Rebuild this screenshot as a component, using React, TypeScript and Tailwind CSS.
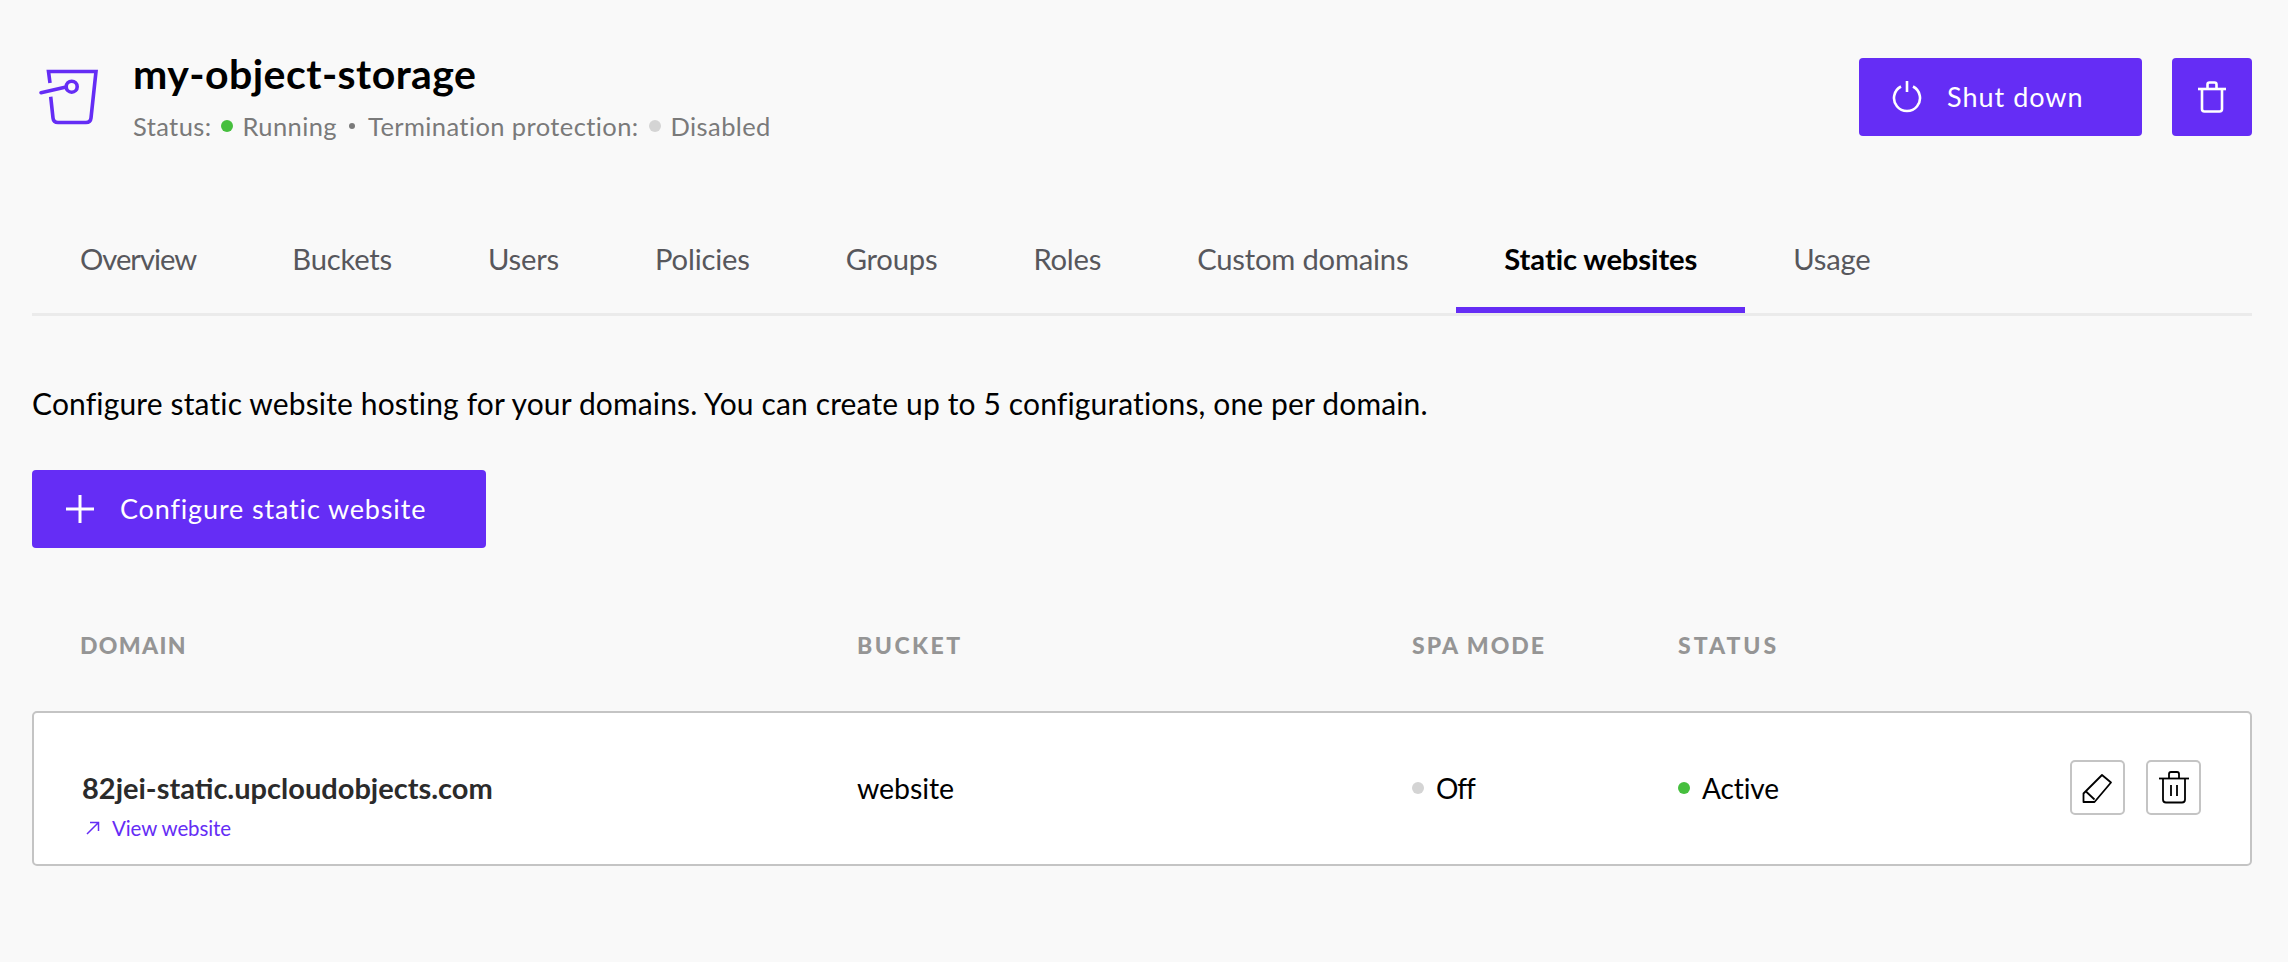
import React from "react";

const font = "font-['Lato','Noto_Sans',sans-serif]";

function BucketIcon() {
  return (
    <svg width="60" height="64" viewBox="0 0 60 64" fill="none" stroke="#652df5" strokeWidth="3.6" className="shrink-0">
      <path d="M12 21 L10.5 9.5 H58 L53 56 Q52.5 60.5 48 60.5 H20 Q15.5 60.5 15 56 L12.7 34.7" />
      <path d="M3 30.7 L27 25.3" strokeLinecap="round" />
      <circle cx="33.7" cy="24.7" r="5.5" />
    </svg>
  );
}

function PowerIcon() {
  return (
    <svg width="30" height="34" viewBox="0 0 30 34" fill="none" stroke="#fff" strokeWidth="2.6">
      <path d="M15 1 V12" />
      <path d="M9 6.5 A13 13 0 1 0 21 6.5" />
    </svg>
  );
}

function TrashOutline() {
  return (
    <svg width="30" height="32" viewBox="0 0 30 32" fill="none" stroke="#fff" strokeWidth="2.6">
      <path d="M1 8 H29" />
      <path d="M10.5 8 V3.5 Q10.5 1.5 12.5 1.5 H17.5 Q19.5 1.5 19.5 3.5 V8" />
      <path d="M5 8 V28 Q5 30.5 7.5 30.5 H22.5 Q25 30.5 25 28 V8" />
    </svg>
  );
}

function PlusIcon() {
  return (
    <svg width="28" height="28" viewBox="0 0 28 28" fill="none" stroke="#fff" strokeWidth="3">
      <path d="M14 0 V28 M0 14 H28" />
    </svg>
  );
}

function ArrowIcon() {
  return (
    <svg width="14" height="14" viewBox="0 0 14 14" fill="none" stroke="#652df5" strokeWidth="1.5">
      <path d="M1 13 L12.5 1.5 M4 1.5 H12.5 V10" />
    </svg>
  );
}

function PencilIcon() {
  return (
    <svg width="31" height="32" viewBox="0 0 31 32" fill="none" stroke="#000" strokeWidth="1.8">
      <path d="M20 3 L29 10.5 L12.5 30 H1.5 V21.5 Z" strokeLinejoin="round" />
      <path d="M4 19.5 L12.5 27.5" />
    </svg>
  );
}

function RowTrashIcon() {
  return (
    <svg width="30" height="33" viewBox="0 0 30 33" fill="none" stroke="#000" strokeWidth="1.8">
      <path d="M0 7.5 H30" />
      <path d="M10 7 V3 Q10 1 12 1 H18 Q20 1 20 3 V7" />
      <path d="M4 7.5 V28.5 Q4 31.5 7 31.5 H23 Q26 31.5 26 28.5 V7.5" />
      <path d="M12 14 V25 M18 14 V25" />
    </svg>
  );
}

const tabs = ["Overview", "Buckets", "Users", "Policies", "Groups", "Roles", "Custom domains", "Static websites", "Usage"];

export default function App() {
  return (
    <div className={`${font} min-h-screen w-full bg-[#f9f9f9] px-[32px] pt-[58px] pr-[36px] text-black`}>
      <header className="flex items-start justify-between">
        <div className="flex items-start">
          <div className="ml-[6px] pt-[4px]">
            <BucketIcon />
          </div>
          <div className="ml-[35px] -mt-[9px]">
            <h1 className="text-[41px] leading-[50px] font-bold tracking-[0.45px]">my-object-storage</h1>
            <div className="mt-[10px] flex items-center text-[25.5px] leading-[34px] tracking-[0.4px] text-[#7a7a7a]">
              <span>Status:</span>
              <span className="ml-[10px] h-[12px] w-[12px] rounded-full bg-[#46bf3e]" />
              <span className="ml-[9px]">Running</span>
              <span className="ml-[12px] h-[6px] w-[6px] rounded-full bg-[#7a7a7a]" />
              <span className="ml-[13px]">Termination protection:</span>
              <span className="ml-[10px] h-[12px] w-[12px] rounded-full bg-[#d4d4d4]" />
              <span className="ml-[10px]">Disabled</span>
            </div>
          </div>
        </div>
        <div className="flex gap-[30px]">
          <button className="flex h-[78px] w-[283px] items-center rounded-[4px] bg-[#652df5] pl-[33px] text-[27px] tracking-[1px] text-white">
            <PowerIcon />
            <span className="ml-[25px]">Shut down</span>
          </button>
          <button className="flex h-[78px] w-[80px] items-center justify-center rounded-[4px] bg-[#652df5]">
            <TrashOutline />
          </button>
        </div>
      </header>

      <nav className="mt-[77px] flex h-[96px] border-b-[3px] border-[#ebebeb]">
        {tabs.map((t) => {
          const active = t === "Static websites";
          const overview = t === "Overview";
          return (
            <div
              key={t}
              className={`flex h-[93px] items-start border-b-[6px] px-[48px] pt-[21px] text-[29.2px] leading-[36px] ${
                active
                  ? "border-[#652df5] font-bold tracking-[-0.1px] text-black"
                  : overview
                    ? "border-transparent tracking-[-1px] text-[#57575c]"
                    : "border-transparent tracking-[-0.2px] text-[#57575c]"
              }`}
            >
              {t}
            </div>
          );
        })}
      </nav>

      <p className="mt-[67px] text-[30px] leading-[40px] tracking-[0.14px]">
        Configure static website hosting for your domains. You can create up to 5 configurations, one per domain.
      </p>

      <button className="mt-[47px] flex h-[78px] w-[454px] items-center rounded-[4px] bg-[#652df5] pl-[34px] text-[27px] tracking-[0.85px] text-white">
        <PlusIcon />
        <span className="ml-[26px]">Configure static website</span>
      </button>

      <div className="mt-[82px] grid grid-cols-[777px_555px_266px_1fr] pl-[48px] text-[23px] leading-[30px] font-black text-[#959595]">
        <div className="tracking-[1.3px]">DOMAIN</div>
        <div className="tracking-[2.5px]">BUCKET</div>
        <div className="tracking-[2px]">SPA MODE</div>
        <div className="tracking-[3px]">STATUS</div>
      </div>

      <div className="mt-[51px] grid h-[155px] grid-cols-[775px_555px_266px_1fr] rounded-[5px] border-2 border-[#c4c4c4] bg-white pl-[48px] pr-[49px]">
        <div className="pt-[55px]">
          <div className="text-[29px] leading-[40px] font-bold text-[#2b2b2b]">82jei-static.upcloudobjects.com</div>
          <a className="mt-[7px] ml-[4px] flex items-center text-[20.5px] leading-[26px] tracking-[-0.1px] text-[#652df5]">
            <ArrowIcon />
            <span className="ml-[12px]">View website</span>
          </a>
        </div>
        <div className="pt-[55px] text-[28.5px] leading-[40px] tracking-[-0.1px]">website</div>
        <div className="mt-[55px] flex h-[40px] items-center text-[28px] tracking-[-1px]">
          <span className="h-[12px] w-[12px] rounded-full bg-[#d4d4d4]" />
          <span className="ml-[12px]">Off</span>
        </div>
        <div className="flex items-start justify-between">
          <div className="mt-[55px] flex h-[40px] items-center text-[28px] tracking-[-0.1px]">
            <span className="h-[12px] w-[12px] rounded-full bg-[#46bf3e]" />
            <span className="ml-[12px]">Active</span>
          </div>
          <div className="mt-[47px] flex gap-[21px]">
            <button className="flex h-[55px] w-[55px] items-center justify-center rounded-[5px] border-2 border-[#c4c4c4] bg-white">
              <PencilIcon />
            </button>
            <button className="flex h-[55px] w-[55px] items-center justify-center rounded-[5px] border-2 border-[#c4c4c4] bg-white">
              <RowTrashIcon />
            </button>
          </div>
        </div>
      </div>
    </div>
  );
}
